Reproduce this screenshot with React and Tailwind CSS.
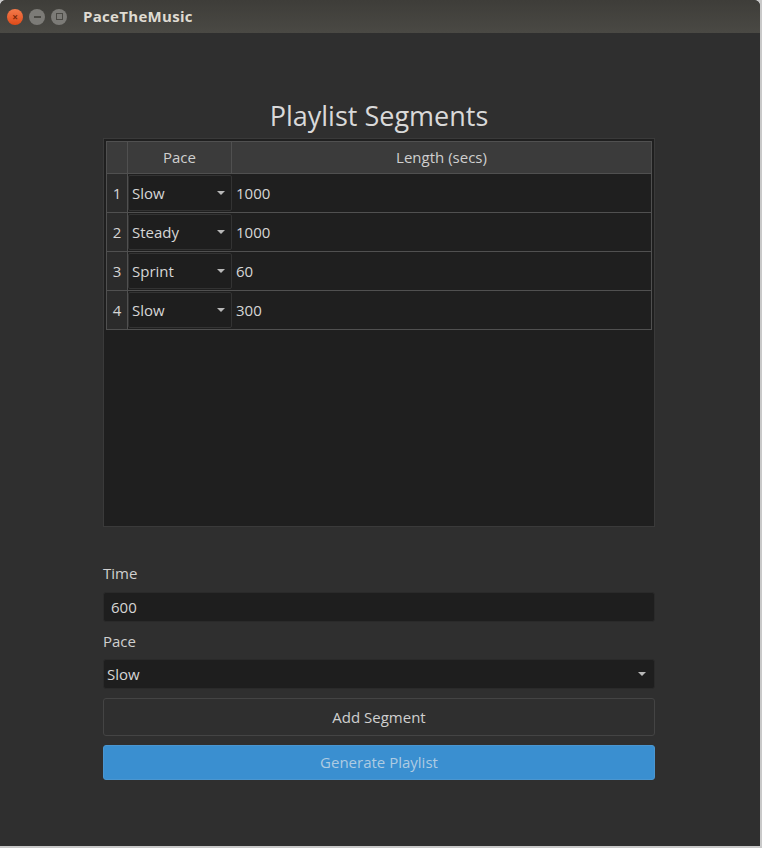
import { useState } from 'react'

const font = { fontFamily: '"Open Sans", "Noto Sans", sans-serif' }

// строки таблицы сегментов
const SEGMENTS = [
  { pace: 'Slow', length: '1000' },
  { pace: 'Steady', length: '1000' },
  { pace: 'Sprint', length: '60' },
  { pace: 'Slow', length: '300' },
]

function Arrow() {
  return <span className="inline-block w-0 h-0 border-l-[4px] border-r-[4px] border-t-[4px] border-l-transparent border-r-transparent border-t-[#b8b8b8]"></span>
}

function TitleBar() {
  return (
    <div className="h-[33px] flex items-center bg-gradient-to-b from-[#3e3d39] to-[#4a4944] rounded-t-[6px] px-[7px]">
      <div className="flex items-center gap-[6px]">
        <div className="w-[16px] h-[16px] rounded-full bg-gradient-to-b from-[#f47a4a] to-[#df4a16] flex items-center justify-center">
          <span className="text-[10px] leading-none font-bold text-[#7a2a0a]">×</span>
        </div>
        <div className="w-[16px] h-[16px] rounded-full bg-[#7c7b77] flex items-center justify-center">
          <span className="w-[7px] h-[2px] bg-[#4a4944]"></span>
        </div>
        <div className="w-[16px] h-[16px] rounded-full bg-[#7c7b77] flex items-center justify-center">
          <span className="w-[7px] h-[7px] border-[1.5px] border-[#4a4944]"></span>
        </div>
      </div>
      <span className="ml-[16px] text-[15px] font-bold tracking-[0.3px] text-[#dfdbd2]" style={font}>PaceTheMusic</span>
    </div>
  )
}

function SegmentsTable({ segments }) {
  return (
    <div className="mt-[4px] h-[389px] border border-[#3a3a3a] bg-[#1f1f1f] p-[2px]">
      {/* заголовок */}
      <div className="flex h-[33px] bg-[#3b3b3b] border border-[#505050] text-[15px] text-[#cfcfcf]">
        <div className="w-[21px] border-r border-[#505050]"></div>
        <div className="w-[104px] border-r border-[#505050] flex items-center justify-center">Pace</div>
        <div className="flex-1 flex items-center justify-center">Length (secs)</div>
      </div>
      {segments.map((s, i) => (
        <div key={i} className="flex h-[39px] border-x border-b border-[#505050] text-[15px] text-[#d6d6d6]">
          <div className="w-[21px] bg-[#2b2b2b] border-r border-[#505050] flex items-center justify-center">{i + 1}</div>
          <div className="w-[104px] py-[1px]">
            <div className="h-full bg-[#1e1e1e] border border-[#333] rounded-[2px] flex items-center justify-between pl-[3px] pr-[6px]">
              <span>{s.pace}</span>
              <Arrow />
            </div>
          </div>
          <div className="flex-1 flex items-center pl-[4px]">{s.length}</div>
        </div>
      ))}
    </div>
  )
}

export default function App() {
  const [segments] = useState(SEGMENTS)
  const [time] = useState('600')

  return (
    <div className="w-[762px] h-[848px] bg-[#c9c9c9]" style={font}>
      <div className="w-[760px] h-[846px] bg-[#2f2f2f] rounded-t-[6px] flex flex-col">
        <TitleBar />
        <div className="w-[552px] ml-[103px] flex flex-col">
          <h1 className="mt-[65px] text-[27px] leading-[36px] text-center text-[#d9d9d9]">Playlist Segments</h1>
          <SegmentsTable segments={segments} />

          <label className="mt-[35px] text-[15px] leading-[22px] text-[#d0d0d0]">Time</label>
          <div className="mt-[8px] h-[30px] bg-[#1e1e1e] border border-[#2a2a2a] rounded-[3px] flex items-center pl-[7px] text-[15px] text-[#d6d6d6]">{time}</div>

          <label className="mt-[8px] text-[15px] leading-[22px] text-[#d0d0d0]">Pace</label>
          <div className="mt-[7px] h-[30px] bg-[#1e1e1e] border border-[#2a2a2a] rounded-[3px] flex items-center justify-between pl-[3px] pr-[8px] text-[15px] text-[#d6d6d6]">
            <span>Slow</span>
            <Arrow />
          </div>

          <button className="mt-[9px] h-[38px] bg-[#2f2f2f] border border-[#444] rounded-[3px] text-[15px] text-[#d0d0d0]">Add Segment</button>
          <button className="mt-[9px] h-[35px] bg-[#3a8fd0] border border-[#4a96d0] rounded-[3px] text-[15px] text-[#aecbe2]">Generate Playlist</button>
        </div>
      </div>
    </div>
  )
}
